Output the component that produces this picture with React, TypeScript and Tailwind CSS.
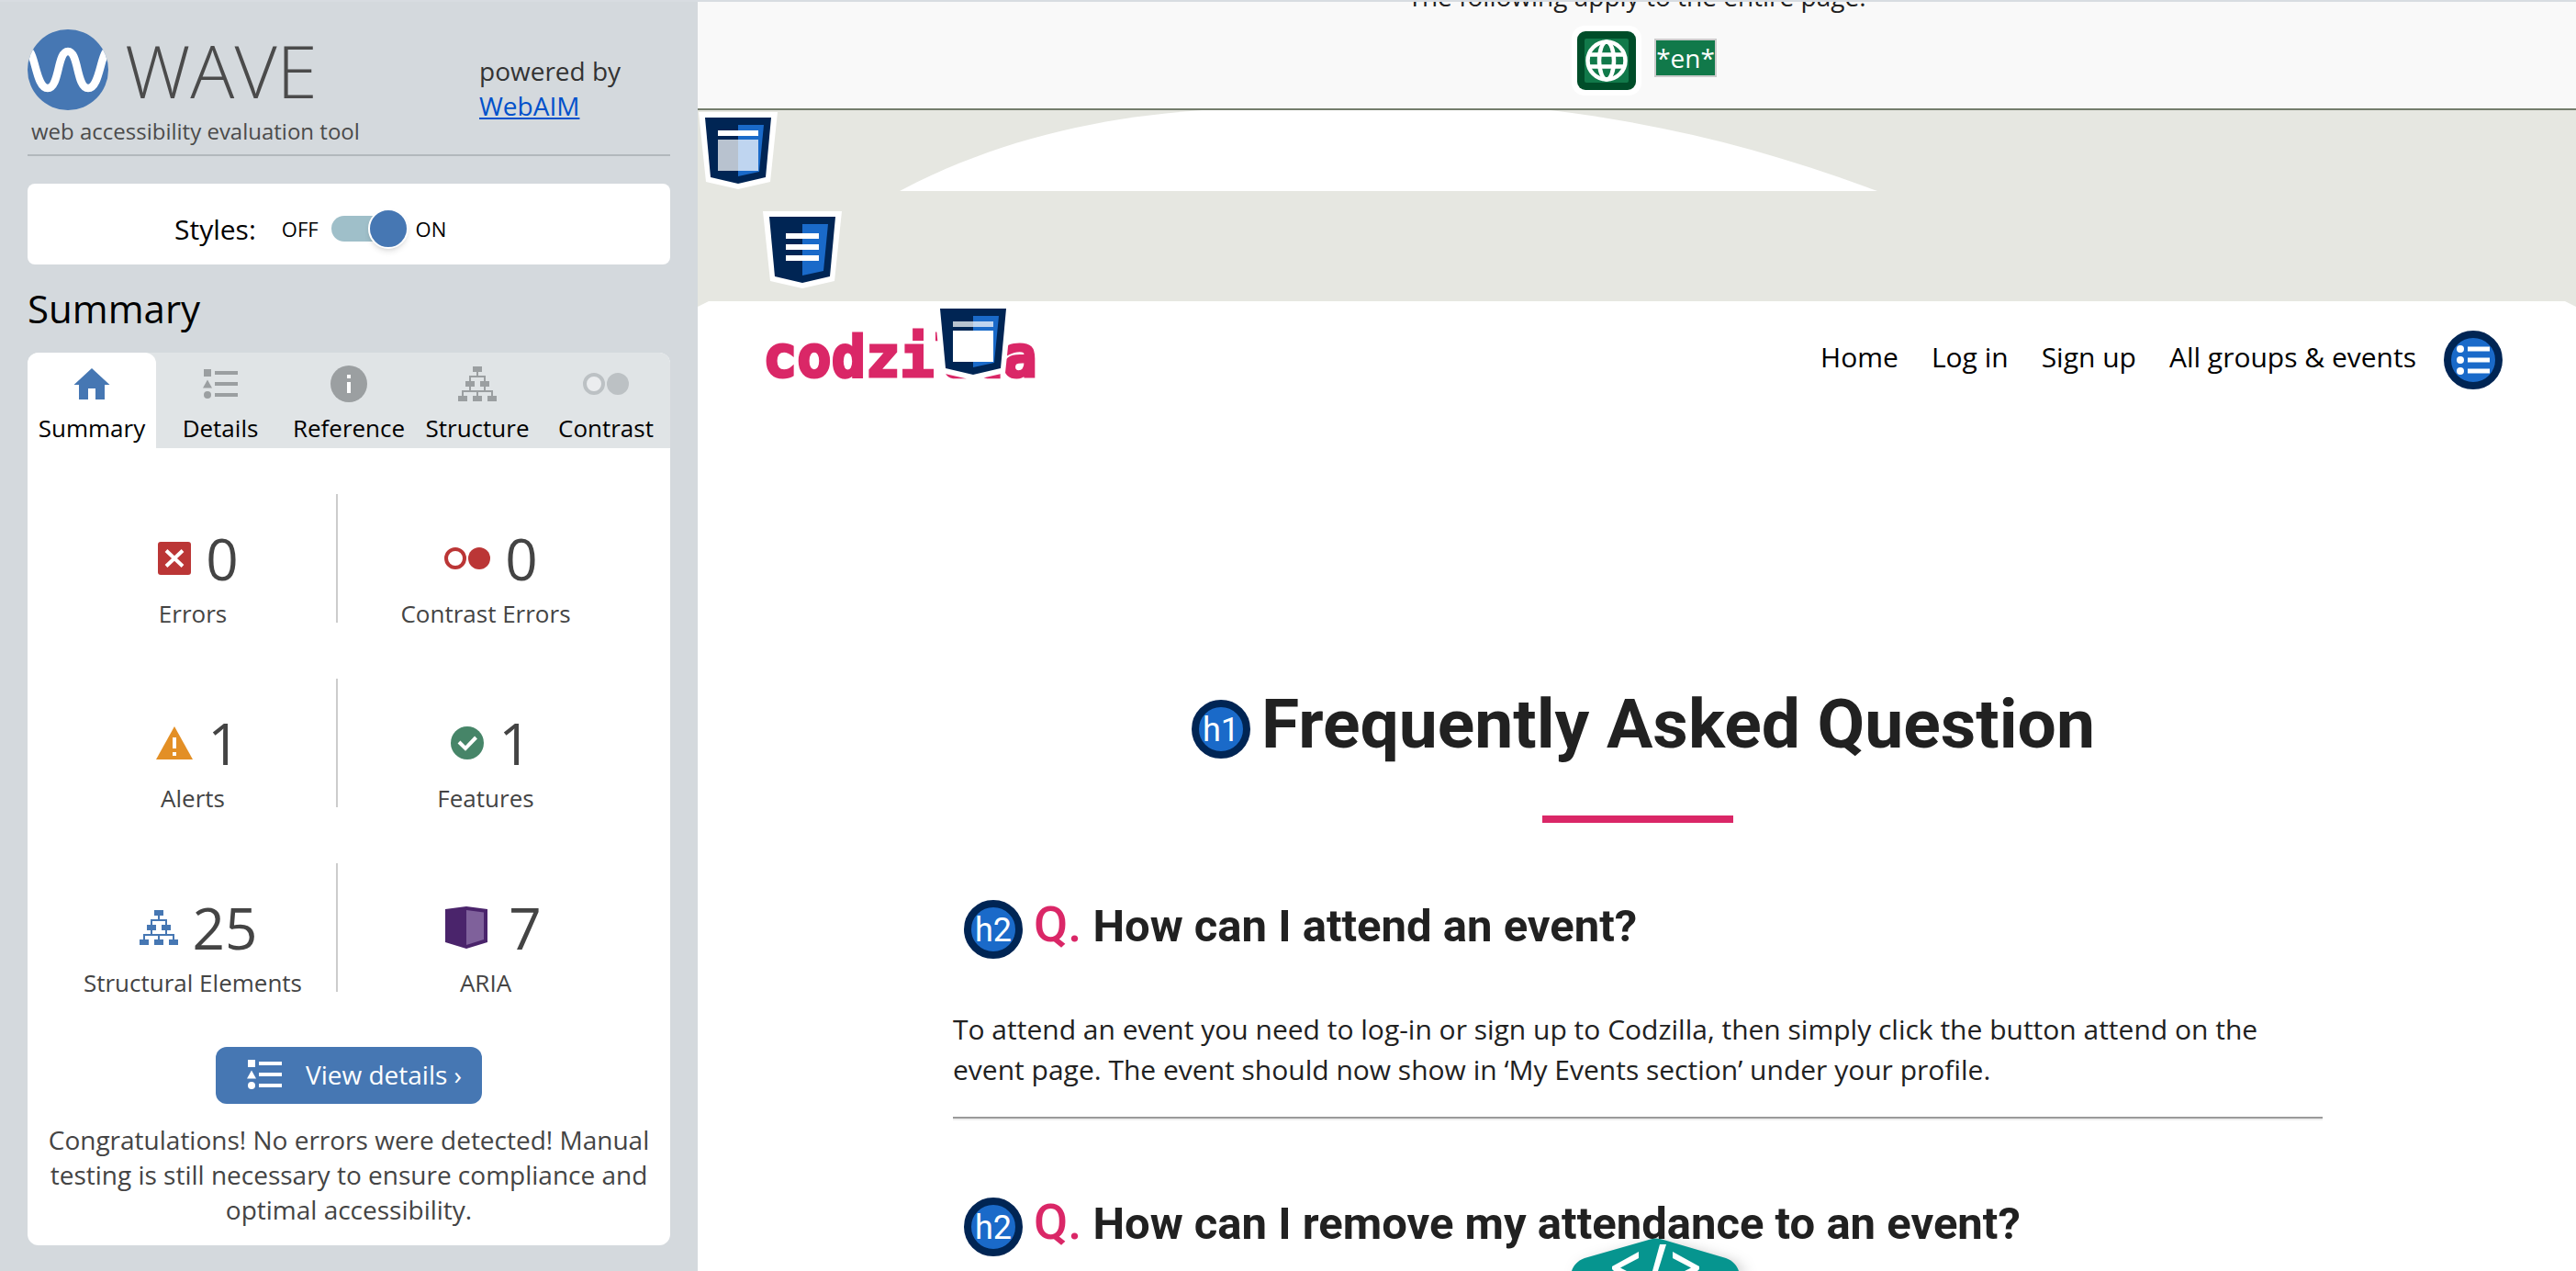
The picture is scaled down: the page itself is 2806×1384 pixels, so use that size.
import React from "react";

type IconProps = { className?: string };

function WaveLogo() {
  return (
    <svg className="size-[88px] shrink-0" viewBox="0 0 88 88" aria-hidden="true">
      <defs>
        <clipPath id="wave-disc">
          <circle cx="44" cy="44" r="44" />
        </clipPath>
      </defs>
      <circle cx="44" cy="44" r="44" fill="#4677b3" />
      <g clipPath="url(#wave-disc)">
        <path
          d="M0 22C9 26 9 64 22 64C35 64 32 24 44 24C56 24 53 64 66 64C79 64 79 26 88 22"
          fill="none"
          stroke="#fff"
          strokeWidth="8.5"
        />
      </g>
    </svg>
  );
}

function HomeIcon({ className }: IconProps) {
  return (
    <svg className={className} width="40" height="34" viewBox="0 0 40 34" fill="currentColor" aria-hidden="true">
      <path d="M20 0L39.500 18H34V34H24V22H16V34H6V18H0.500Z" />
    </svg>
  );
}

function ListIcon({ className }: IconProps) {
  return (
    <svg className={className} width="38" height="32" viewBox="0 0 38 32" fill="currentColor" aria-hidden="true">
      <path d="M1 0h8v8H1zM5 11.500L10 20.500H0z" />
      <circle cx="5" cy="28" r="4" />
      <path d="M13 2h25v4H13zM13 14h25v4H13zM13 26h25v4H13z" />
    </svg>
  );
}

function InfoIcon({ className }: IconProps) {
  return (
    <svg className={className} width="40" height="40" viewBox="0 0 40 40" aria-hidden="true">
      <circle cx="20" cy="20" r="20" fill="currentColor" />
      <path d="M18 10h4v4h-4zM18 18h4v12h-4z" fill="#fff" />
    </svg>
  );
}

function TreeIcon({ className }: IconProps) {
  return (
    <svg className={className} width="42" height="38" viewBox="0 0 42 38" aria-hidden="true">
      <path
        d="M21 6V11M13 17V11H29V17M13 22V27M29 22V27M5 33V27H37V33M21 27V33"
        fill="none"
        stroke="currentColor"
        strokeWidth="2"
      />
      <path d="M16 0h10v6H16zM8 16h10v6H8zM24 16h10v6H24zM0 32h10v6H0zM16 32h10v6H16zM32 32h10v6H32z" fill="currentColor" />
    </svg>
  );
}

function ContrastIcon({ className }: IconProps) {
  return (
    <svg className={className} width="50" height="24" viewBox="0 0 50 24" aria-hidden="true">
      <circle cx="12" cy="12" r="10" fill="#fff" fillOpacity="0.35" stroke="currentColor" strokeWidth="4" />
      <circle cx="38" cy="12" r="12" fill="currentColor" />
    </svg>
  );
}

function ErrorIcon() {
  return (
    <svg width="36" height="36" viewBox="0 0 36 36" aria-hidden="true">
      <rect width="36" height="36" rx="3" fill="#bb3636" />
      <path d="M9 9.500L27 26.500M27 9.500L9 26.500" stroke="#fff" strokeWidth="4" />
    </svg>
  );
}

function AlertIcon() {
  return (
    <svg width="40" height="36" viewBox="0 0 40 36" aria-hidden="true">
      <path d="M20 0L40 36H0Z" fill="#e38f25" />
      <path d="M18 12h4v12h-4zM18 28h4v4h-4z" fill="#fff" />
    </svg>
  );
}

function FeatureIcon() {
  return (
    <svg width="36" height="36" viewBox="0 0 36 36" aria-hidden="true">
      <circle cx="18" cy="18" r="18" fill="#468568" />
      <path d="M9 17L16 24L27.500 12" fill="none" stroke="#fff" strokeWidth="4" />
    </svg>
  );
}

function AriaIcon() {
  return (
    <svg width="58" height="46" viewBox="-4 0 58 46" aria-hidden="true">
      <path d="M1 3L24 0L47 3V39L24 46L1 39Z" fill="#4a246b" />
      <path d="M24 4L43 6.500V36L24 42Z" fill="#7f619b" />
    </svg>
  );
}

type LandmarkKind = "header" | "main" | "paragraph";

function LandmarkIcon({ kind }: { kind: LandmarkKind }) {
  return (
    <svg className="h-[84px] w-[86px]" viewBox="0 0 86 84" role="img" aria-label={kind}>
      <path d="M0 0H86L78 76L43 84L8 76Z" fill="#fff" />
      <path d="M7 6H79L73 71L43 78L13 71Z" fill="#002554" />
      <path d="M43 14H71L66 65L43 70Z" fill="#1a6ac9" />
      {kind === "header" && (
        <>
          <path d="M21 20H65V26H21Z" fill="#fff" />
          <path d="M21 30H65V64H21Z" fill="#fff" fillOpacity="0.72" />
        </>
      )}
      {kind === "main" && (
        <>
          <path d="M21 20H65V26H21Z" fill="#fff" fillOpacity="0.72" />
          <path d="M21 30H65V64H21Z" fill="#fff" />
        </>
      )}
      {kind === "paragraph" && <path d="M25 24H61V30H25ZM25 36H61V42H25ZM25 48H61V54H25Z" fill="#fff" />}
    </svg>
  );
}

function GlobeIcon() {
  return (
    <svg className="size-[76px]" viewBox="0 0 76 76" role="img" aria-label="Language">
      <rect width="76" height="76" rx="14" fill="#fff" />
      <rect x="6" y="6" width="64" height="64" rx="9" fill="#004d29" />
      <rect x="14" y="14" width="48" height="48" rx="2" fill="#11794a" />
      <g fill="none" stroke="#fff" strokeWidth="4.500">
        <circle cx="38" cy="38" r="20.500" />
        <ellipse cx="38" cy="38" rx="8" ry="20.500" />
        <path d="M18 31.500H58M18 44.500H58" />
      </g>
    </svg>
  );
}

function UnorderedListIcon() {
  return (
    <svg className="size-16" viewBox="0 0 64 64" role="img" aria-label="Unordered list">
      <circle cx="32" cy="32" r="28" fill="#1a6ac9" stroke="#002554" strokeWidth="8" />
      <g fill="#fff">
        <circle cx="18" cy="20" r="4" />
        <circle cx="18" cy="32" r="4" />
        <circle cx="18" cy="44" r="4" />
        <path d="M26 17.500H50V22.500H26ZM26 29.500H50V34.500H26ZM26 41.500H50V46.500H26Z" />
      </g>
    </svg>
  );
}

function HeadingBadge({ level }: { level: 1 | 2 }) {
  return (
    <span className="flex size-16 shrink-0 items-center justify-center rounded-full border-8 border-[#002554] bg-[#1a6ac9] pt-0.5 text-[36px] leading-none font-normal text-white">
      h{level}
    </span>
  );
}

const tabs = [
  { label: "Summary", icon: <HomeIcon />, active: true, tone: "text-[#4677b3]" },
  { label: "Details", icon: <ListIcon />, active: false, tone: "text-[#9b9fa1]" },
  { label: "Reference", icon: <InfoIcon />, active: false, tone: "text-[#9b9fa1]" },
  { label: "Structure", icon: <TreeIcon />, active: false, tone: "text-[#9b9fa1]" },
  { label: "Contrast", icon: <ContrastIcon />, active: false, tone: "text-[#bcc1c4]" },
];

const stats = [
  { label: "Errors", value: 0, icon: <ErrorIcon /> },
  { label: "Contrast Errors", value: 0, icon: <ContrastIcon className="text-[#bb3636]" /> },
  { label: "Alerts", value: 1, icon: <AlertIcon /> },
  { label: "Features", value: 1, icon: <FeatureIcon /> },
  { label: "Structural Elements", value: 25, icon: <TreeIcon className="text-[#4677b3]" /> },
  { label: "ARIA", value: 7, icon: <AriaIcon /> },
];

function Sidebar() {
  return (
    <aside className="flex w-[760px] shrink-0 flex-col bg-[#d4d9dd] px-[30px] pt-[30px] pb-7">
      <header className="flex h-[138px] items-start justify-between border-b-2 border-[#b2b8bc]">
        <div>
          <div className="flex items-center gap-[18px]">
            <WaveLogo />
            <span className="text-[80px] leading-[88px] font-light text-[#4b4b4b]">WAVE</span>
          </div>
          <p className="pl-1 text-[24px] leading-[46px] text-[#4b4b4b]">web accessibility evaluation tool</p>
        </div>
        <p className="w-[208px] pt-[26px] text-[28px] leading-[38px] text-[#333]">
          powered by
          <br />
          <a href="#webaim" className="text-[#0051cb] underline">
            WebAIM
          </a>
        </p>
      </header>

      <div className="mt-[30px] flex h-[88px] items-center rounded-lg bg-white pt-2.5 pl-40">
        <span className="text-[30px]">Styles:</span>
        <span className="ml-7 text-[22px]">OFF</span>
        <label className="relative mr-2 ml-3.5 flex h-11 w-[84px] items-center">
          <input type="checkbox" role="switch" aria-label="Styles" defaultChecked className="peer sr-only" />
          <span className="h-7 w-[72px] rounded-full bg-[#9fbfc9]" />
          <span className="absolute right-0 size-11 rounded-full border-2 border-white bg-[#4677b3] shadow-md" />
        </label>
        <span className="text-[22px]">ON</span>
      </div>

      <h2 className="mt-5 text-[42px] leading-[56px]">Summary</h2>

      <section className="mt-5 flex flex-col rounded-xl bg-white">
        <div role="tablist" className="grid grid-cols-5 rounded-t-xl bg-[#e0e4e6]">
          {tabs.map((tab) => (
            <button
              key={tab.label}
              role="tab"
              aria-selected={tab.active}
              className={
                tab.active
                  ? "flex h-[104px] flex-col items-center rounded-t-xl bg-white pt-3.5"
                  : "flex h-[104px] flex-col items-center pt-3.5"
              }
            >
              <span className={`flex h-10 items-center ${tab.tone}`}>{tab.icon}</span>
              <span className="mt-2.5 text-[26px] leading-9">{tab.label}</span>
            </button>
          ))}
        </div>

        <div className="mt-[50px] grid grid-cols-2 gap-y-[61px] pr-11 pl-5 text-[#444]">
          {stats.map((stat, i) => (
            <div
              key={stat.label}
              className={
                i % 2 === 0
                  ? "flex h-[140px] flex-col items-center justify-end border-r-2 border-[#ccc] pl-1"
                  : "flex h-[140px] flex-col items-center justify-end pl-1"
              }
            >
              <div className="flex items-center gap-4 pl-3">
                {stat.icon}
                <span className="text-[62px] leading-[84px]">{stat.value}</span>
              </div>
              <span className="mt-2 text-[26px] leading-5">{stat.label}</span>
            </div>
          ))}
        </div>

        <div className="flex flex-col items-center px-5 pt-[60px] pb-5">
          <button className="flex h-[62px] items-center gap-[26px] rounded-xl bg-[#4677b3] pr-[22px] pb-0.5 pl-[34px] text-[28px] text-white">
            <ListIcon />
            View details ›
          </button>
          <p className="mt-5 text-center text-[28px] leading-[38px] text-[#444]">
            Congratulations! No errors were detected! Manual testing is still necessary to ensure compliance and optimal
            accessibility.
          </p>
        </div>
      </section>
    </aside>
  );
}

function PageInfoBar() {
  return (
    <div className="flex h-[118px] shrink-0 flex-col items-center justify-end overflow-hidden border-b-2 border-[#747d6c] bg-[#f9f9f9] pb-[14px]">
      <p className="text-[28px] leading-10 text-[#212121]">The following apply to the entire page:</p>
      <div className="mt-3 flex items-center gap-[14px] pl-4">
        <GlobeIcon />
        <span className="-mt-1.5 border-2 border-[#ccc] bg-[#11794a] text-[28px] leading-[38px] font-medium text-white">
          *en*
        </span>
      </div>
    </div>
  );
}

function Hero() {
  return (
    <div className="relative h-[208px] shrink-0 bg-[#e6e7e1]">
      <svg className="absolute top-0 left-[220px] h-[88px] w-[1065px]" viewBox="0 0 1065 88" aria-hidden="true">
        <path d="M0 88C100 35 210 8 330 0H709C840 16 950 45 1065 88Z" fill="#fff" />
      </svg>
      <div className="absolute top-0.5 left-px">
        <LandmarkIcon kind="header" />
      </div>
      <div className="absolute top-[110px] left-[71px]">
        <LandmarkIcon kind="paragraph" />
      </div>
    </div>
  );
}

function SiteNav() {
  const links = ["Home", "Log in", "Sign up", "All groups & events"];
  return (
    <div className="bg-[#e6e7e1]">
      <nav className="flex h-32 items-center justify-between bg-white pr-20 pl-[71px] [clip-path:polygon(12px_0,calc(100%-12px)_0,100%_6px,100%_100%,0_100%,0_6px)]">
        <a
          href="#home"
          className="relative pb-1.5 font-['DejaVu_Sans_Mono',monospace] text-[62px] leading-none font-bold text-[#da2767] [-webkit-text-stroke:3px_#da2767]"
        >
          codzilla
          <span className="absolute -top-7 left-[186px]">
            <LandmarkIcon kind="main" />
          </span>
        </a>
        <div className="flex items-center text-[30px]">
          <ul className="flex items-center gap-9 pr-[30px] pb-2">
            {links.map((link) => (
              <li key={link}>
                <a href="#nav">{link}</a>
              </li>
            ))}
          </ul>
          <UnorderedListIcon />
        </div>
      </nav>
    </div>
  );
}

function Question({ children }: { children: React.ReactNode }) {
  return (
    <h2 className="flex h-16 items-center gap-3 pl-3 font-[Roboto,sans-serif] text-[49px] leading-none font-bold">
      <HeadingBadge level={2} />
      <span className="pb-2.5">
        <span className="text-[54px] font-medium text-[#da2767]">Q.</span> {children}
      </span>
    </h2>
  );
}

function CodeToolbarTab() {
  return (
    <button
      aria-label="Code panel"
      className="absolute bottom-0 left-1/2 ml-[-71px] h-9 overflow-visible drop-shadow-[6px_6px_8px_rgba(0,0,0,0.3)]"
    >
      <svg width="184" height="36" viewBox="0 0 184 36" aria-hidden="true">
        <path d="M0 36C2 30 6 25 14 22L84 2Q92 -1 100 2L168 22C176 25 180 30 182 36Z" fill="#06958f" />
        <path
          d="M73 15V22L53 32.500L60 36H46L44 34V31ZM110 15V22L130 32.500L123 36H137L139 34V31ZM96 7H103L94 36H88Z"
          fill="#fff"
        />
      </svg>
    </button>
  );
}

export default function App() {
  return (
    <div className="flex h-screen overflow-hidden border-t-2 border-[#d8dce1] bg-white font-['Open_Sans','Noto_Sans',sans-serif] text-black">
      <Sidebar />
      <main className="relative flex min-w-0 flex-1 flex-col overflow-hidden">
        <PageInfoBar />
        <Hero />
        <SiteNav />

        <div className="mx-auto mt-[306px] w-full max-w-[1494px] pl-0.5 text-[#212121]">
          <h1 className="flex h-16 items-center justify-center gap-3 pl-3 font-[Roboto,sans-serif] text-[75px] leading-none font-bold">
            <HeadingBadge level={1} />
            <span className="pb-3">Frequently Asked Question</span>
          </h1>
          <div className="mx-auto mt-[62px] h-2 w-52 bg-[#da2767]" />

          <div className="mt-[84px]">
            <Question>How can I attend an event?</Question>
            <p className="mt-[55px] text-[30px] leading-[44px]">
              To attend an event you need to log-in or sign up to Codzilla, then simply click the button attend on the
              event page. The event should now show in ‘My Events section’ under your profile.
            </p>
            <hr className="mt-[29px] h-1 border-t-2 border-b-2 border-t-[#9a9a9a] border-b-[#eee]" />
          </div>

          <div className="mt-[84px]">
            <Question>How can I remove my attendance to an event?</Question>
          </div>
        </div>

        <CodeToolbarTab />
      </main>
    </div>
  );
}
